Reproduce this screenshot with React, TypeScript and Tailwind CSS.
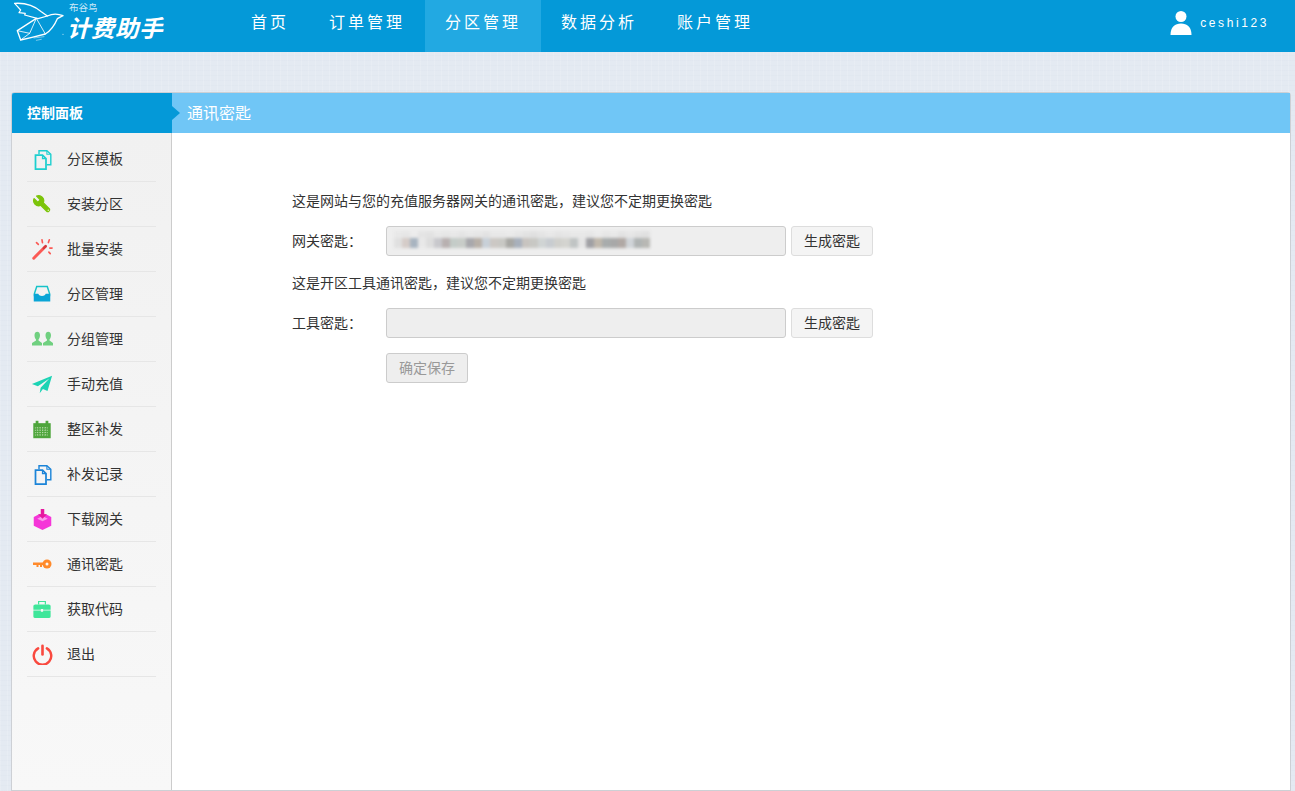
import React from "react";

const cjk = "font-['Liberation_Sans','Noto_Sans_CJK_SC',sans-serif]";

const BirdLogo = () => (
  <svg width="70" height="50" viewBox="0 0 210 150" fill="none" stroke="white" strokeWidth="4" strokeLinejoin="round" strokeLinecap="round">
    <path d="M20 10 C50 8 80 18 100 35 L118 48 C130 42 148 40 165 47 L148 56 C140 75 128 92 112 102 L72 112 L38 120 L28 92 L85 55" />
    <path d="M20 10 L38 30 L33 38 L52 40 L50 45 L90 56 L118 48" strokeWidth="3.500" />
    <path d="M28 92 L65 100 L85 55 L112 102 M65 100 L38 120" strokeWidth="2.500" />
    <path d="M78 114 L108 110 M85 121 L100 118" strokeWidth="2" opacity="0.7" />
    <circle cx="165" cy="103" r="1.500" fill="white" stroke="none" />
  </svg>
);

const DocIcon = ({ color }: { color: string }) => (
  <svg width="21" height="21" viewBox="0 0 24 24" fill="none" stroke={color} strokeWidth="2">
    <path d="M8 6 V2 H17 L21.500 6 V18 H17" strokeWidth="1.600" />
    <path d="M17 2 V6 H21" strokeWidth="1.200" />
    <path d="M4 7 H12 L16 11 V23 H4 Z" />
    <path d="M12 7 V11 H16" strokeWidth="1.400" />
  </svg>
);

const WrenchIcon = () => (
  <svg width="20" height="20" viewBox="0 0 24 24" fill="#7cc40a" stroke="#7cc40a" strokeWidth="1.500" strokeLinejoin="round">
    <g transform="translate(24,0) scale(-1,1)">
      <path d="M14.700 6.300a1 1 0 0 0 0 1.400l1.600 1.600a1 1 0 0 0 1.400 0l3.770-3.770a6 6 0 0 1-7.940 7.940l-6.910 6.910a2.120 2.120 0 0 1-3-3l6.910-6.910a6 6 0 0 1 7.940-7.940l-3.760 3.760z" />
    </g>
    <circle cx="19.500" cy="19.500" r="0.800" fill="#f2f7e0" stroke="none" />
  </svg>
);

const WandIcon = () => (
  <svg width="22" height="22" viewBox="0 0 24 24" fill="none" stroke="#fb5a55" strokeLinecap="round">
    <path d="M3 22 L13 12" strokeWidth="3.200" />
    <path d="M14 11 L16 9" strokeWidth="3" stroke="#d8383a" />
    <path d="M12 2 L12.500 5 M20 2 L19 5 M23 11 H20.500 M21 17 L19.500 15.500 M6 5 L8 7" strokeWidth="1.800" />
  </svg>
);

const InboxIcon = () => (
  <svg width="18" height="18" viewBox="0 0 24 24">
    <path d="M5 2 H19 L22 11 V14 H17 C16 17 8 17 7 14 H2 V11 Z" fill="none" stroke="#17c3c9" strokeWidth="2" />
    <path d="M1 11.500 H7 C8 15.500 16 15.500 17 11.500 H23 V22 H1 Z" fill="#0aa5d6" />
  </svg>
);

const UsersIcon = () => (
  <svg width="21" height="16" viewBox="0 0 21 16" fill="#70d080">
    <path d="M2.500 4 C2.500 -0.500 8 -0.500 8 4 C8 6 7.300 7.500 6.500 8.500 V9.500 L10 12 V14.500 H0 V12 L4 9.500 V8.500 C3.200 7.500 2.500 6 2.500 4 Z" />
    <path d="M13.500 4 C13.500 -0.500 19 -0.500 19 4 C19 6 18.300 7.500 17.500 8.500 V9.500 L21 12 V14.500 H11 V12 L15 9.500 V8.500 C14.200 7.500 13.500 6 13.500 4 Z" />
  </svg>
);

const PlaneIcon = () => (
  <svg width="22" height="22" viewBox="0 0 24 24" fill="#1bd3b4">
    <path d="M23 3 L1 12 L7.500 14.500 L20 6 L10.500 16 L9.500 22 L13 17.500 L18 19.500 Z" />
  </svg>
);

const CalendarIcon = () => (
  <svg width="20" height="19" viewBox="0 0 24 24">
    <rect x="1" y="4" width="22" height="19" fill="#4ea53c" />
    <rect x="4" y="1" width="3.500" height="6" fill="#4ea53c" />
    <rect x="16.500" y="1" width="3.500" height="6" fill="#4ea53c" />
    <path d="M3 10 H21 M3 13 H21 M3 16 H21 M3 19 H21 M6 9 V21 M9.500 9 V21 M13 9 V21 M16.500 9 V21" stroke="#c9e6bd" strokeWidth="1" strokeDasharray="1.400 1.600" />
  </svg>
);

const BoxIcon = () => (
  <svg width="21" height="23" viewBox="0 0 24 26" fill="#f536d8">
    <path d="M2 10 L8 7 H16 L22 10 V20 L12 25 L2 20 Z" />
    <path d="M6 12 L12 9 L18 12 L12 15 Z" fill="#f99bea" />
    <path d="M10 1 H14 V7 H17 L12 12 L7 7 H10 Z" fill="#e6189f" />
  </svg>
);

const KeyIcon = () => (
  <svg width="19" height="10" viewBox="0 0 19 10">
    <circle cx="14" cy="5" r="4.500" fill="#ff8a2b" />
    <circle cx="14" cy="5" r="1.500" fill="#f7f7f7" />
    <path d="M0 3.500 H11 V6 H9 V8 H7 V6 H5.500 V8 H3.500 V6 H0 Z" fill="#ff8a2b" />
  </svg>
);

const CaseIcon = () => (
  <svg width="18" height="18" viewBox="0 0 24 24">
    <path d="M7.500 6 V2 H16.500 V6" fill="none" stroke="#3fe69a" strokeWidth="1.600" />
    <path d="M3 6 H21 Q23.500 6 23.500 8 V13 H13.500 V12 H10.500 V13 H0.500 V8 Q0.500 6 3 6 Z" fill="#3fe69a" />
    <path d="M0.500 14 H10.500 V15.500 H13.500 V14 H23.500 V22 Q23.500 24 21 24 H3 Q0.500 24 0.500 22 Z" fill="#3fe69a" />
  </svg>
);

const PowerIcon = () => (
  <svg width="21" height="21" viewBox="0 0 24 24" fill="none" stroke="#f9493f" strokeLinecap="round">
    <path d="M7 5 A10 10 0 1 0 17 5" strokeWidth="2.800" />
    <path d="M12 2 V12" strokeWidth="3" />
  </svg>
);

const UserIcon = () => (
  <svg width="22" height="24" viewBox="0 0 22 24" fill="white">
    <circle cx="11" cy="5.500" r="5.500" />
    <path d="M0.500 24 C0.500 16 5 12.500 11 12.500 C17 12.500 21.500 16 21.500 24 Z" />
  </svg>
);

const menu: { label: string; icon: React.ReactNode }[] = [
  { label: "分区模板", icon: <DocIcon color="#1dcfcf" /> },
  { label: "安装分区", icon: <WrenchIcon /> },
  { label: "批量安装", icon: <WandIcon /> },
  { label: "分区管理", icon: <InboxIcon /> },
  { label: "分组管理", icon: <UsersIcon /> },
  { label: "手动充值", icon: <PlaneIcon /> },
  { label: "整区补发", icon: <CalendarIcon /> },
  { label: "补发记录", icon: <DocIcon color="#1b84d8" /> },
  { label: "下载网关", icon: <BoxIcon /> },
  { label: "通讯密匙", icon: <KeyIcon /> },
  { label: "获取代码", icon: <CaseIcon /> },
  { label: "退出", icon: <PowerIcon /> },
];

const nav = ["首页", "订单管理", "分区管理", "数据分析", "账户管理"];

// the key is pixelated out in the picture
const maskTop = ["#e8e8e8", "#e6e6e6", "#ececec", "#e4e4e4", "#e2e2e2", "#e8e8e8", "#e6e6e6", "#e8e8e8", "#e4e4e4", "#e8e8e8", "#e6e6e6", "#e2e2e2", "#e8e8e8", "#e8e8e8", "#eaeaea", "#e6e6e6", "#e2e2e2", "#e0e0e0", "#e4e4e4", "#e8e8e8", "#e4e4e4", "#e6e6e6", "#e8e8e8", "#e8e8e8", "#e6e6e6", "#ebebeb", "#e6e6e6", "#e8e8e8", "#e2e2e2", "#e6e6e6", "#e2e2e2", "#e0e0e0"];
const maskBottom = ["#e0e0e0", "#d5ccc8", "#a8b4c0", "#e8e8e8", "#dddddd", "#c8c8cc", "#b8b0b0", "#c4ccc8", "#c8ccc8", "#a8a8ac", "#b8b0a8", "#c8d0d8", "#ccc8c4", "#c8c8c4", "#a8a8a4", "#a8b0bc", "#c8c4c0", "#c8c8c4", "#d0d4d4", "#c8ccd0", "#d0d0cc", "#d4d4d0", "#c0c4c4", "#e4e4e4", "#a0a0a4", "#c0b8ac", "#a8acac", "#a8a8a8", "#b0a8a4", "#d0d4d8", "#b0b4b4", "#b8b8b4"];

const KeyMask = () => (
  <div className="blur-[1.500px] mb-[3px]">
    <div className="flex h-[7px]">
      {maskTop.map((c, i) => (
        <span key={i} className="w-[8px]" style={{ backgroundColor: c }} />
      ))}
    </div>
    <div className="flex h-[10px]">
      {maskBottom.map((c, i) => (
        <span key={i} className="w-[8px]" style={{ backgroundColor: c }} />
      ))}
    </div>
  </div>
);

const KeyRow = ({ label, masked }: { label: string; masked?: boolean }) => (
  <div className="flex items-center h-[30px]">
    <span className="w-[94px]">{label}</span>
    <div className="w-[400px] h-[30px] bg-[#eeeeee] border border-[#cccccc] rounded-[3px] px-[7px] flex items-center overflow-hidden">
      {masked && <KeyMask />}
    </div>
    <button className="ml-[5px] w-[82px] h-[30px] bg-[#f4f4f4] border border-[#dddddd] rounded-[3px] text-[#333333]">
      生成密匙
    </button>
  </div>
);

export default function App() {
  return (
    <div className={`${cjk} h-[791px] overflow-hidden flex flex-col text-[14px] text-[#333333] bg-[#e4eaf2] bg-[repeating-linear-gradient(90deg,#ffffff22_0px,#ffffff22_1px,transparent_1px,transparent_7px),repeating-linear-gradient(0deg,#c8d2e018_0px,#c8d2e018_1px,transparent_1px,transparent_5px)]`}>
      <header className="h-[52px] shrink-0 bg-[#0499d8] flex text-white">
        <div className="w-[231px] shrink-0 relative pl-[8px]">
          <BirdLogo />
          <span className="absolute left-[69px] top-[1px] text-[9.500px] leading-[13px] text-[#cfeaf8]">布谷鸟</span>
          <span className="absolute left-[67px] top-[14px] text-[23.500px] leading-[30px] font-bold italic tracking-[0.500px] whitespace-nowrap">
            计费助手
          </span>
        </div>
        <nav className="flex">
          {nav.map((item) => (
            <a
              key={item}
              className={`px-[20px] text-[16px] tracking-[3px] leading-[45px] ${item === "分区管理" ? "bg-[#22a9e2]" : ""}`}
            >
              {item}
            </a>
          ))}
        </nav>
        <div className="ml-auto flex items-center gap-[8px] pr-[26px] pb-[6px]">
          <UserIcon />
          <span className="text-[12px] tracking-[2.600px]">ceshi123</span>
        </div>
      </header>

      <main className="flex-1 min-h-0 pt-[41px] pl-[12px] pr-[5px] pb-[1px]">
        <div className="h-full flex flex-col rounded-t-[3px] bg-white shadow-[0_0_0_1px_#cdd0d5]">
          <div className="h-[40px] shrink-0 flex bg-[#70c6f6] text-white">
            <div className="w-[160px] relative bg-[#0499d8] pl-[15px] flex items-center font-bold rounded-tl-[3px]">
              控制面板
              <span className="absolute left-full top-[13px] border-y-[7px] border-l-[8px] border-y-transparent border-l-[#0499d8]" />
            </div>
            <div className="pl-[15px] pt-[1px] flex items-center text-[16px]">通讯密匙</div>
          </div>

          <div className="flex-1 min-h-0 flex">
            <aside className="w-[160px] shrink-0 border-r border-[#cccccc] bg-linear-to-b from-[#f1f1f1] to-[#f8f8f8] px-[15px] pt-[4px]">
              {menu.map((m) => (
                <div key={m.label} className="h-[45px] flex items-center border-b border-[#e6e6e6]">
                  <span className="w-[24px] ml-[3px] mr-[13px] flex justify-center">{m.icon}</span>
                  {m.label}
                </div>
              ))}
            </aside>

            <section className="flex-1 pl-[120px] pt-[58px]">
              <p className="leading-[20px] mb-[15px]">这是网站与您的充值服务器网关的通讯密匙，建议您不定期更换密匙</p>
              <KeyRow label="网关密匙：" masked />
              <p className="leading-[20px] mt-[17px] mb-[15px]">这是开区工具通讯密匙，建议您不定期更换密匙</p>
              <KeyRow label="工具密匙：" />
              <button className="block ml-[94px] mt-[15px] w-[82px] h-[30px] bg-[#eeeeee] border border-[#cccccc] rounded-[3px] text-[#999999]">
                确定保存
              </button>
            </section>
          </div>
        </div>
      </main>
    </div>
  );
}
